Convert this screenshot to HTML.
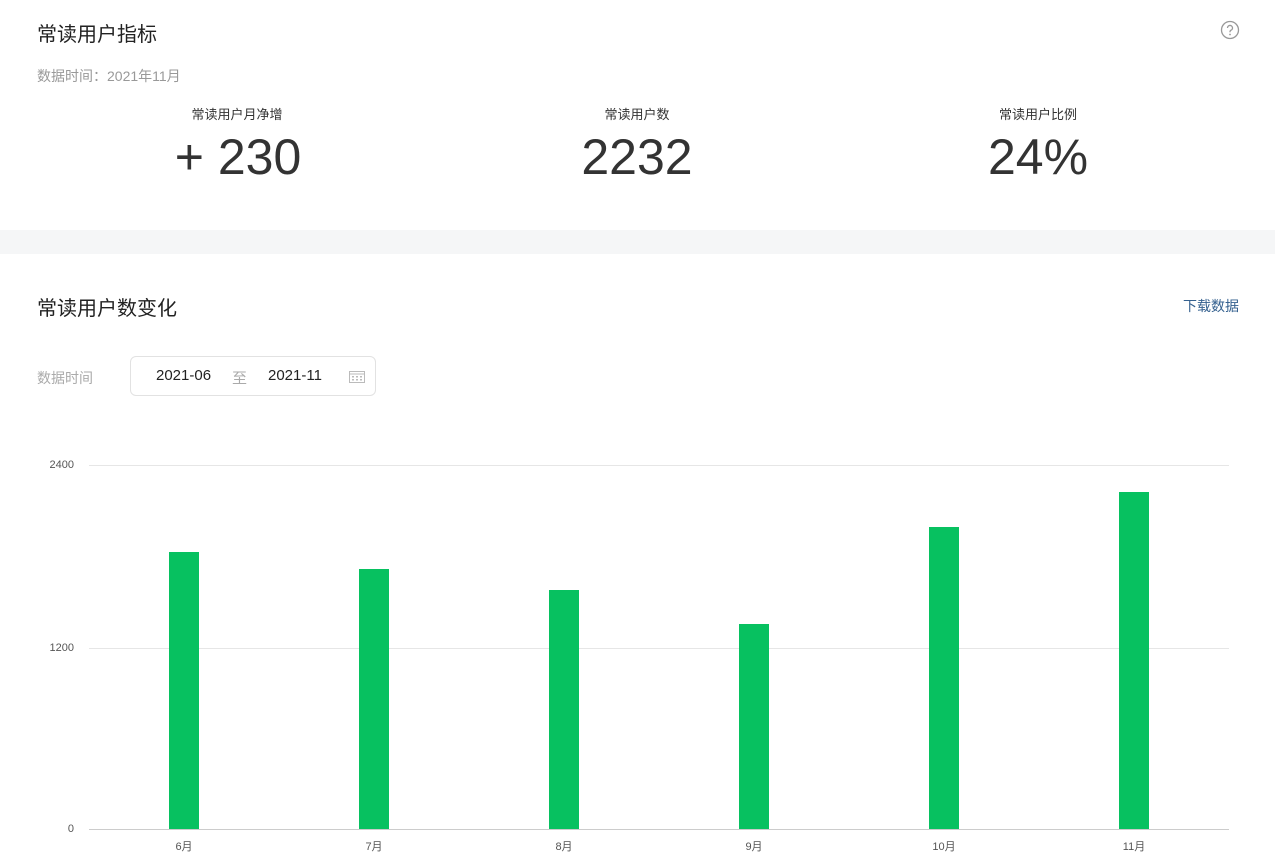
<!DOCTYPE html><html><head><meta charset="utf-8"><style>
body{margin:0;width:1275px;height:867px;background:#fff;font-family:"Liberation Sans","Noto Sans CJK SC",sans-serif;position:relative;overflow:hidden}
.a{position:absolute;white-space:nowrap}
.t{font-size:20px;color:#222}
.num{font-size:50px;color:#333;text-align:center;width:300px;font-family:"Liberation Sans",sans-serif;font-weight:normal}
.lbl{font-size:13px;color:#333;text-align:center;width:300px}
.bar{position:absolute;width:30px;background:#07c160;bottom:38px}
.g{position:absolute;left:89px;width:1140px;height:1px;background:#e6e6e6}
.yl{font-size:11px;color:#555;right:1201px}
.xl{font-size:11px;color:#555;width:60px;text-align:center;top:838px}
</style></head><body>
<div class="a t" style="left:37px;top:18px">常读用户指标</div>
<svg class="a" style="left:1220px;top:20px" width="20" height="20" viewBox="0 0 20 20"><circle cx="10" cy="10" r="8.5" fill="none" stroke="#999" stroke-width="1.3"/><path d="M7.5 8a2.5 2.5 0 1 1 3.3 2.3c-.6.3-.8.7-.8 1.4v.6" fill="none" stroke="#999" stroke-width="1.3"/><circle cx="10" cy="14.5" r=".9" fill="#999"/></svg>
<div class="a" style="left:37px;top:66px;font-size:14px;color:#999">数据时间：2021年11月</div>
<div class="a lbl" style="left:87px;top:104px">常读用户月净增</div>
<div class="a lbl" style="left:487px;top:104px">常读用户数</div>
<div class="a lbl" style="left:888px;top:104px">常读用户比例</div>
<div class="a num" style="left:88px;top:128px">+ 230</div>
<div class="a num" style="left:487px;top:128px">2232</div>
<div class="a num" style="left:888px;top:128px">24%</div>
<div class="a" style="left:0;top:230px;width:1275px;height:24px;background:#f5f6f7"></div>
<div class="a t" style="left:37px;top:292px">常读用户数变化</div>
<div class="a" style="left:1183px;top:296px;font-size:14px;color:#35618f">下载数据</div>
<div class="a" style="left:37px;top:368px;font-size:14px;color:#aaa">数据时间</div>
<div class="a" style="left:130px;top:356px;width:244px;height:38px;border:1px solid #e2e2e2;border-radius:6px"></div>
<div class="a" style="left:156px;top:367px;font-size:15px;color:#222">2021-06</div>
<div class="a" style="left:232px;top:367px;font-size:15px;color:#aaa">至</div>
<div class="a" style="left:268px;top:367px;font-size:15px;color:#222">2021-11</div>
<svg class="a" style="left:349px;top:370px" width="16" height="13" viewBox="0 0 16 13"><rect x=".5" y="1.5" width="15" height="11" fill="none" stroke="#bbb"/><line x1="0" y1="4" x2="16" y2="4" stroke="#bbb"/><g fill="#bbb"><rect x="3" y="6" width="2" height="1.5"/><rect x="7" y="6" width="2" height="1.5"/><rect x="11" y="6" width="2" height="1.5"/><rect x="3" y="9" width="2" height="1.5"/><rect x="7" y="9" width="2" height="1.5"/><rect x="11" y="9" width="2" height="1.5"/></g></svg>
<div class="g" style="top:465px"></div><div class="g" style="top:648px"></div><div class="g" style="top:829px;background:#ccc"></div>
<div class="a yl" style="top:459px">2400</div>
<div class="a yl" style="top:642px">1200</div>
<div class="a yl" style="top:823px">0</div>
<div class="bar" style="left:169px;height:277px"></div>
<div class="bar" style="left:359px;height:260px"></div>
<div class="bar" style="left:549px;height:239px"></div>
<div class="bar" style="left:739px;height:205px"></div>
<div class="bar" style="left:929px;height:302px"></div>
<div class="bar" style="left:1119px;height:337px"></div>
<div class="a xl" style="left:154px">6月</div>
<div class="a xl" style="left:344px">7月</div>
<div class="a xl" style="left:534px">8月</div>
<div class="a xl" style="left:724px">9月</div>
<div class="a xl" style="left:914px">10月</div>
<div class="a xl" style="left:1104px">11月</div>
</body></html>
